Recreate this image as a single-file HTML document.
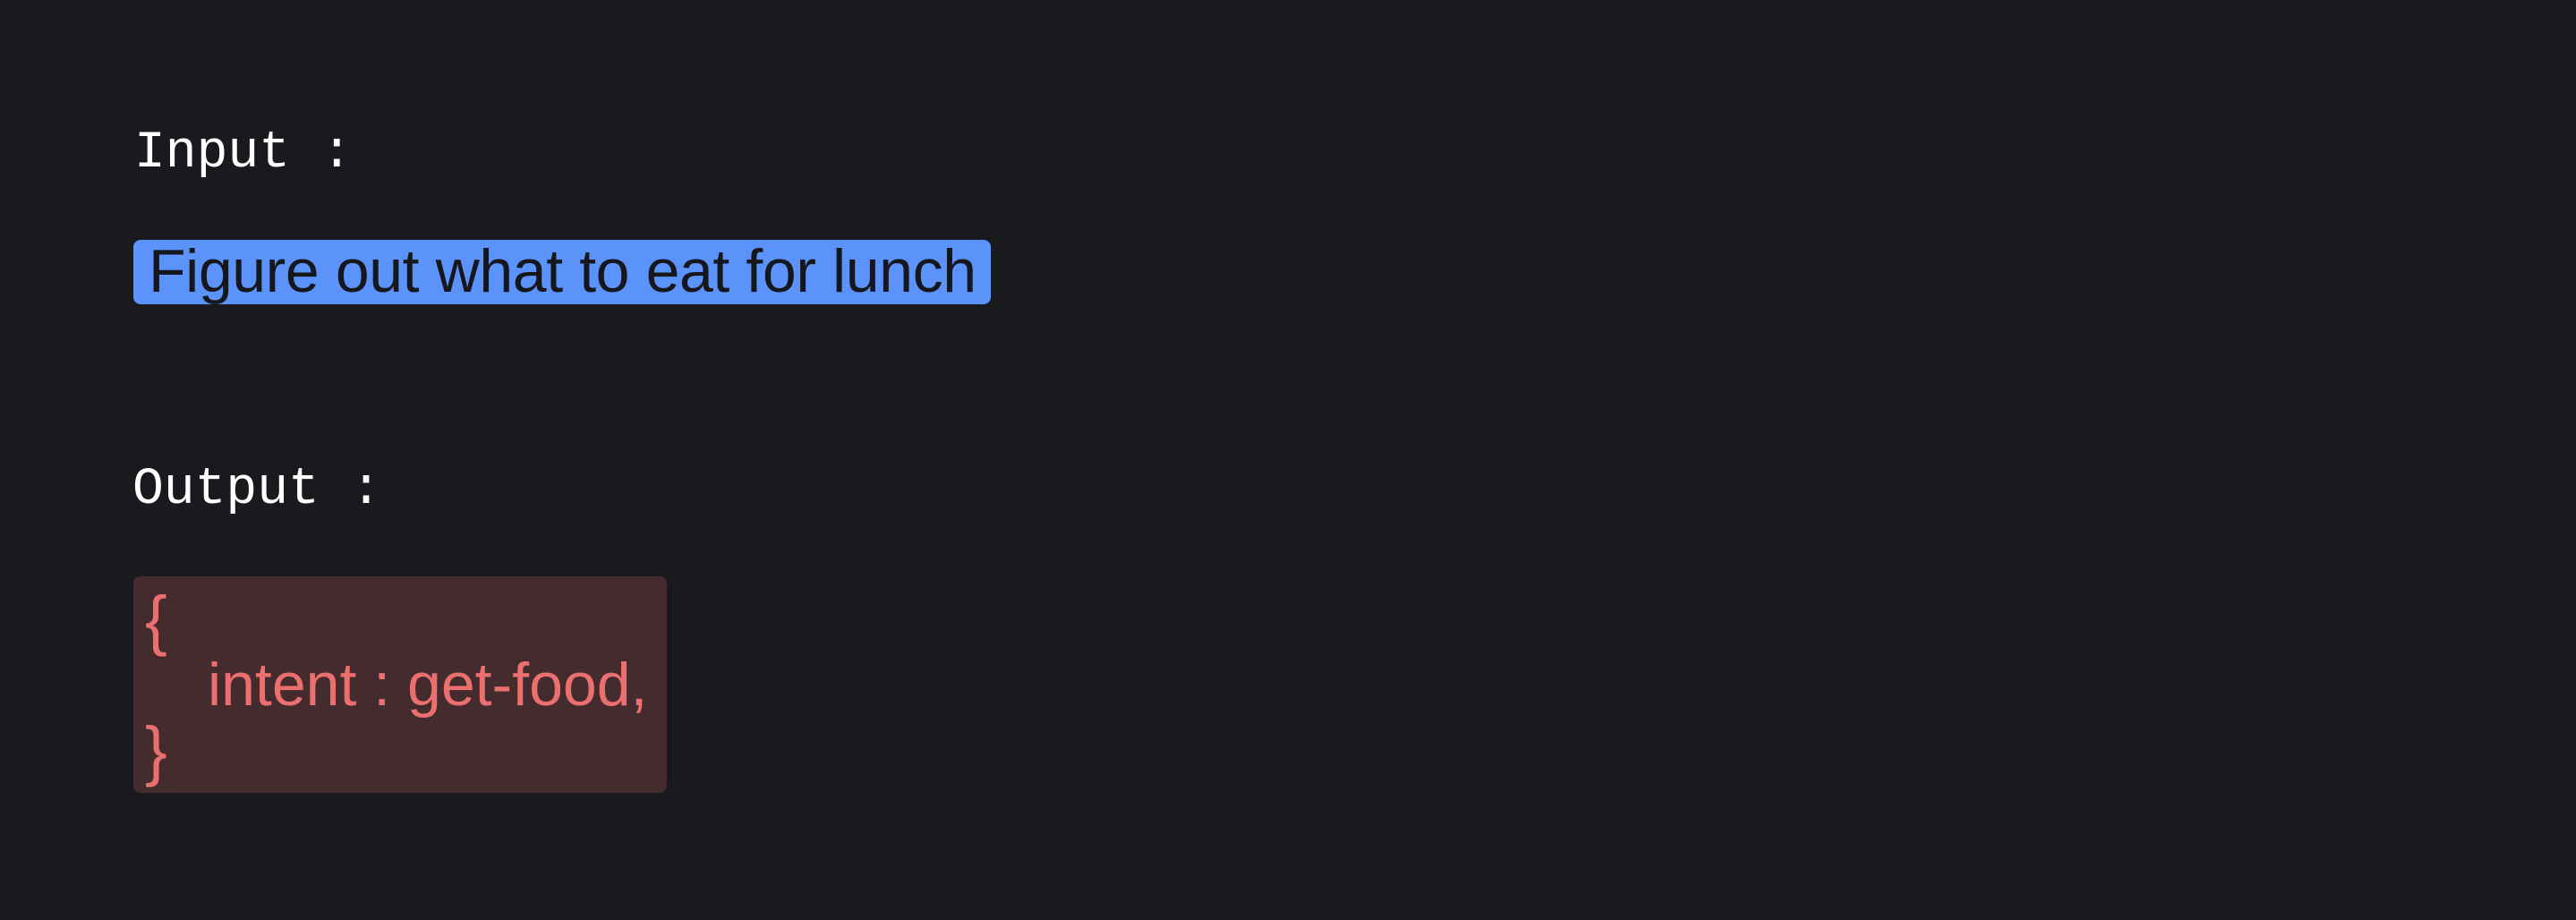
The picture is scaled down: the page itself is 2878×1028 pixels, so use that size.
<!DOCTYPE html>
<html><head><style>
html,body{margin:0;padding:0;}
body{width:2878px;height:1028px;background:#191a1e;position:relative;overflow:hidden;}
.mono{position:absolute;font-family:"Liberation Mono",monospace;color:#fff;font-size:58px;line-height:1;}
.blue{position:absolute;left:149px;top:268px;width:958px;height:72px;background:#5b93fb;border-radius:8px;}
.bt{position:absolute;left:166px;top:263px;font-family:"Liberation Sans",sans-serif;font-size:68px;line-height:80px;color:#15171c;letter-spacing:-0.4px;white-space:nowrap;}
.red{position:absolute;left:149px;top:644px;width:596px;height:242px;background:#432b2e;border-radius:8px;}
.rt{position:absolute;font-family:"Liberation Sans",sans-serif;font-size:68px;line-height:1;color:#ec6f6f;white-space:nowrap;}
</style></head><body>
<div class="mono" style="left:150px;top:143px;">Input :</div>
<div class="blue"></div>
<div class="bt">Figure out what to eat for lunch</div>
<div class="mono" style="left:148px;top:519px;">Output :</div>
<div class="red"></div>
<div class="rt" style="left:162px;top:656px;font-size:74px;">{</div>
<div class="rt" style="left:232px;top:731px;">intent : get-food,</div>
<div class="rt" style="left:162px;top:802px;font-size:74px;">}</div>
</body></html>
